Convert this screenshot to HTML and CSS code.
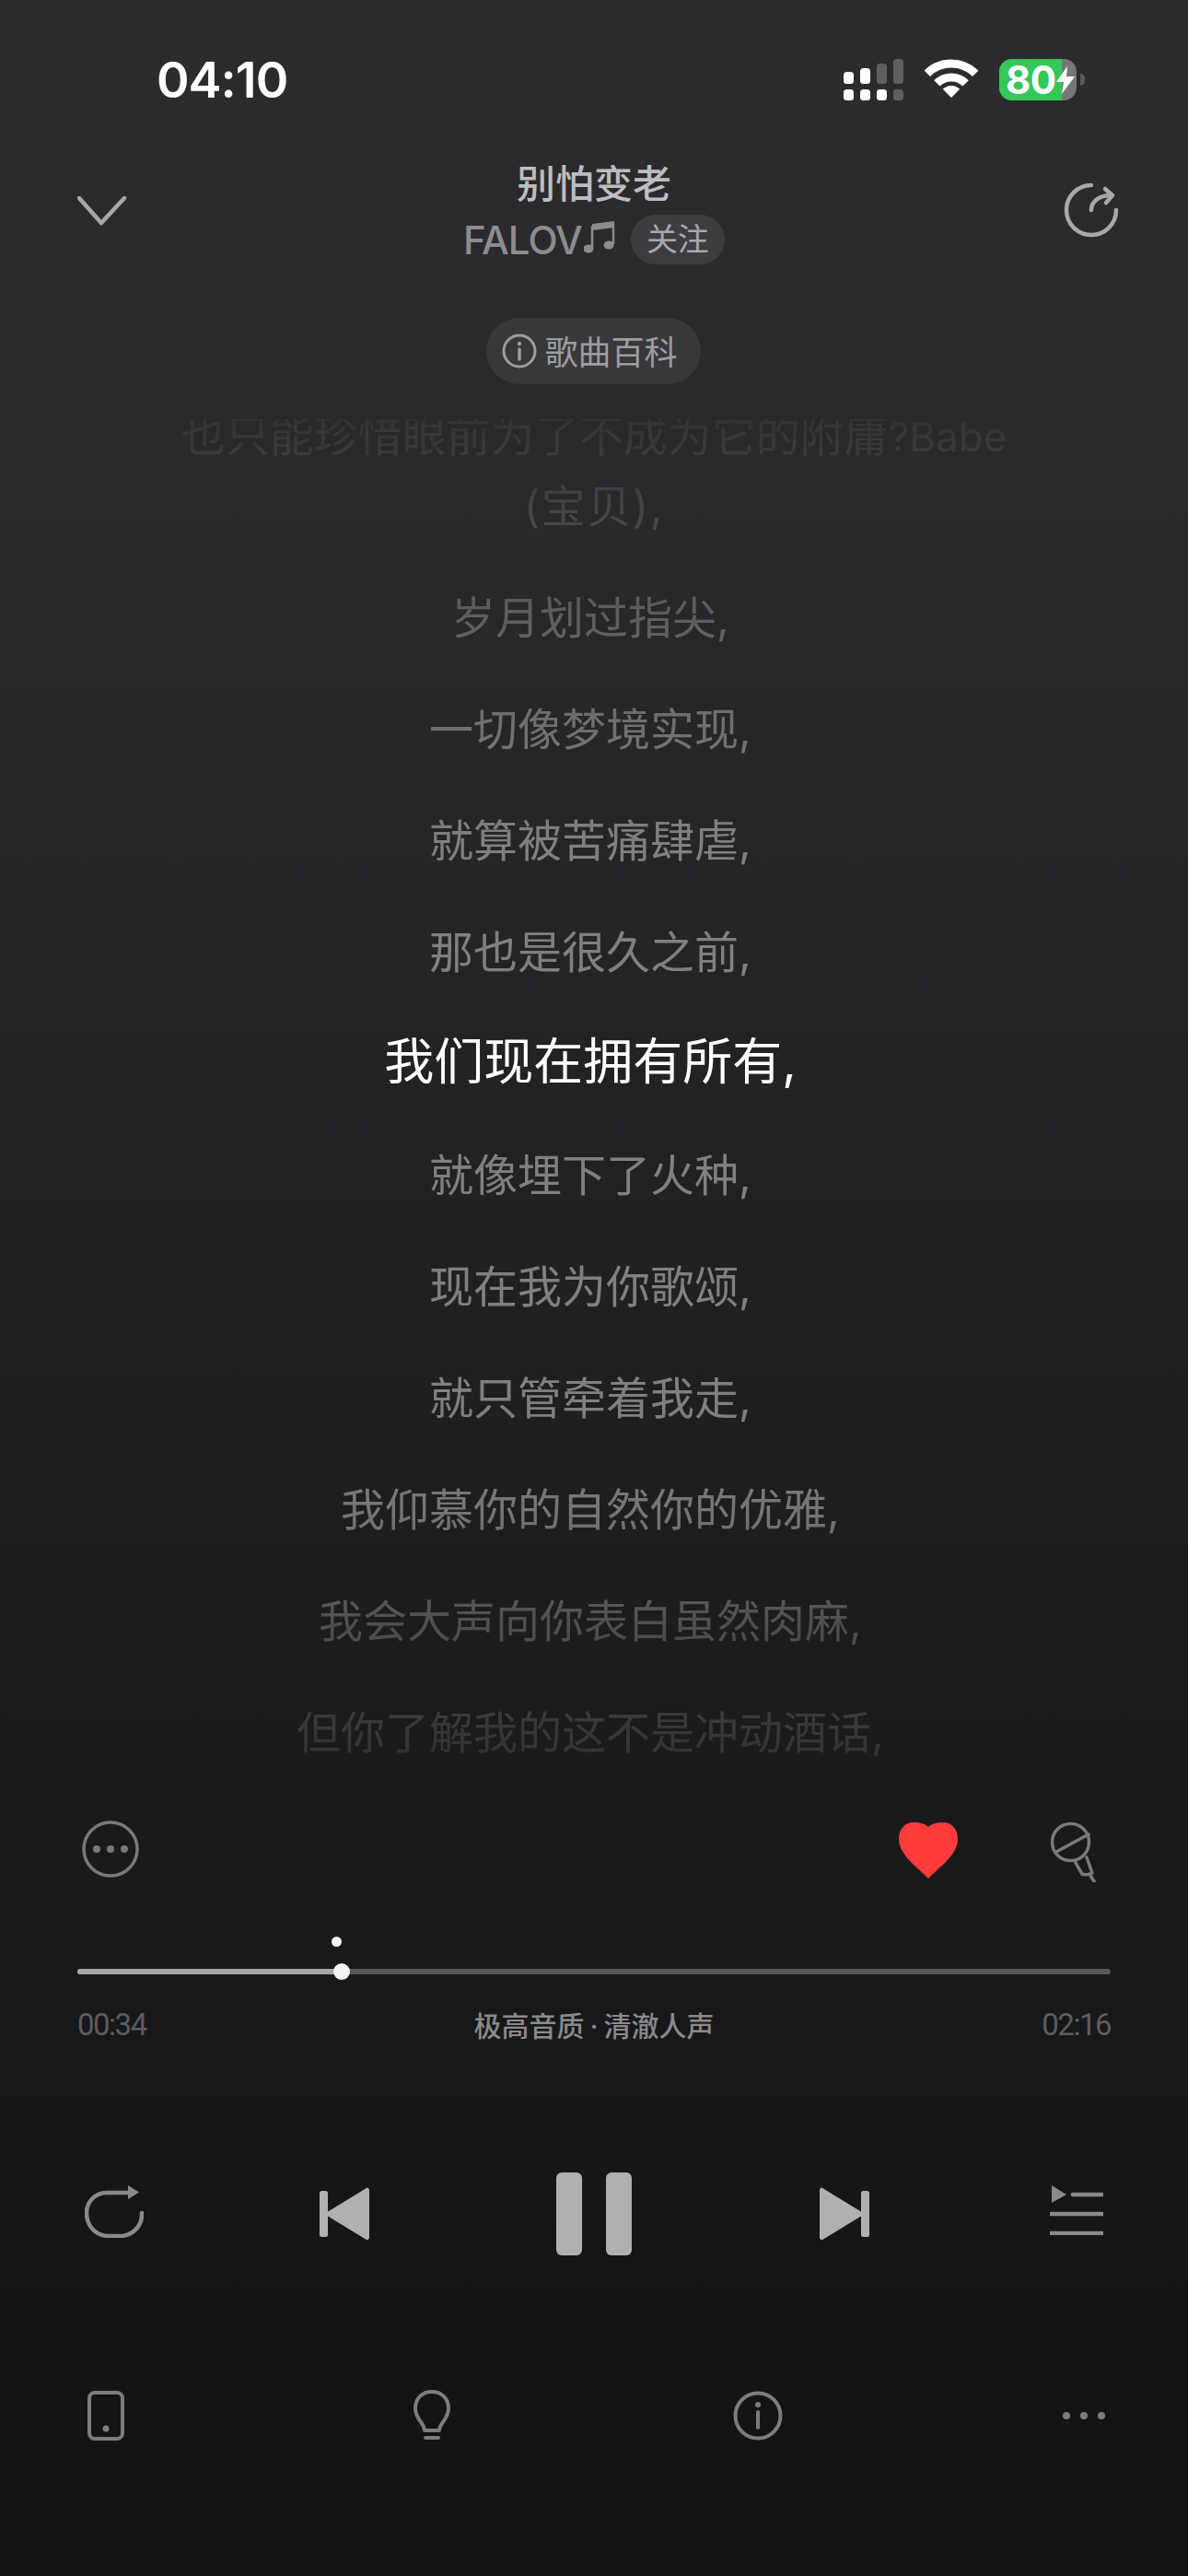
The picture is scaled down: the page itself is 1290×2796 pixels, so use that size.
FILE: index.html
```html
<!DOCTYPE html>
<html lang="zh-CN">
<head>
<meta charset="utf-8">
<title>别怕变老</title>
<link rel="stylesheet" href="styles.css">
</head>
<body>
<main class="screen">
  <div class="status">
    <span class="time">04:10</span>
    <div class="status-icons">
      <svg class="signal" width="66" height="46" viewBox="0 0 66 46">
        <rect class="on" x="0" y="14" width="11" height="13" rx="3.5"/>
        <rect class="on" x="18" y="10" width="11" height="17" rx="3.5"/>
        <rect class="off" x="36" y="5" width="11" height="22" rx="3.5"/>
        <rect class="off" x="54" y="0" width="11" height="27" rx="3.5"/>
        <rect class="on" x="0" y="33" width="11" height="12" rx="3.5"/>
        <rect class="on" x="18" y="33" width="11" height="12" rx="3.5"/>
        <rect class="on" x="36" y="33" width="11" height="12" rx="3.5"/>
        <rect class="off" x="54" y="33" width="11" height="12" rx="3.5"/>
      </svg>
      <svg class="wifi" width="58" height="43" viewBox="0 0 58 43">
        <path class="wifi-arc" d="M2.8 15.8A37 37 0 0 1 55.2 15.8"/>
        <path class="wifi-arc" d="M13.4 26.4A22 22 0 0 1 44.6 26.4"/>
        <path class="wifi-fill" d="M29 42L19.8 32.8A13 13 0 0 1 38.2 32.8Z"/>
      </svg>
      <div class="battery">
        <div class="battery-body">
          <div class="battery-level" style="width:81%"></div>
          <span class="battery-text">80</span>
          <svg class="bolt" width="20" height="30" viewBox="0 0 20 30"><path d="M12 0L0 17H8L6 30L20 11H11Z"/></svg>
        </div>
        <span class="battery-tip"></span>
      </div>
    </div>
  </div>

  <header class="header">
    <svg class="chevron" width="54" height="32" viewBox="0 0 54 32"><path d="M2 2L26 29L51 2"/></svg>
    <div class="song">
      <h1 class="song-title">别怕变老</h1>
      <div class="artist-row">
        <span class="artist">FALOV</span>
        <svg class="note" width="36" height="38" viewBox="0 0 36 38"><path class="beam" d="M9 4L33 1V8L9 11Z"/><path d="M9 6V30M32 3V26"/><ellipse cx="5" cy="31" rx="5.500" ry="4.500"/><ellipse cx="27" cy="27" rx="5.500" ry="4.500"/></svg>
        <span class="follow">关注</span>
      </div>
    </div>
    <svg class="share" width="60" height="60" viewBox="0 0 60 60"><path d="M30 3A27 27 0 1 0 57 30"/><path d="M30 30C30 21 38 14 52 14M45 7L53 14L46 22"/></svg>
  </header>

  <div class="wiki-wrap">
    <div class="wiki">
      <svg class="wiki-icon" width="38" height="38" viewBox="0 0 38 38"><circle cx="19" cy="19" r="17"/><path d="M19 17V28"/><circle class="dot" cx="19" cy="11" r="2.200"/></svg>
      <span>歌曲百科</span>
    </div>
  </div>

  <section class="lyrics">
    <p class="line first">也只能珍惜眼前为了不成为它的附庸<span class="latin">?Babe</span><br><span class="paren">(宝贝),</span></p>
    <p class="line">岁月划过指尖,</p>
    <p class="line">一切像梦境实现,</p>
    <p class="line">就算被苦痛肆虐,</p>
    <p class="line">那也是很久之前,</p>
    <p class="line active">我们现在拥有所有,</p>
    <p class="line">就像埋下了火种,</p>
    <p class="line">现在我为你歌颂,</p>
    <p class="line">就只管牵着我走,</p>
    <p class="line">我仰慕你的自然你的优雅,</p>
    <p class="line">我会大声向你表白虽然肉麻,</p>
    <p class="line">但你了解我的这不是冲动酒话,</p>
  </section>

  <div class="actions">
    <svg class="more-circle" width="62" height="62" viewBox="0 0 62 62"><circle cx="31" cy="31" r="29"/><circle class="dot" cx="16" cy="31" r="4"/><circle class="dot" cx="31" cy="31" r="4"/><circle class="dot" cx="46" cy="31" r="4"/></svg>
    <svg class="heart" width="64" height="62" viewBox="0 0 64 62"><path d="M32 61C22 50 0 36 0 18C0 7 7 0 16 0C23 0 29 2 32 5C35 2 41 0 48 0C57 0 64 7 64 18C64 36 42 50 32 61Z"/></svg>
    <svg class="mic" width="50" height="67" viewBox="0 0 50 67"><circle cx="22.500" cy="23.500" r="20"/><path d="M7 34L42 15"/><path d="M28 46L35 58Q41 60 46 57L40 40"/><path d="M43 58L48 66"/></svg>
  </div>

  <section class="progress">
    <div class="track">
      <div class="track-fill" style="width:25.600%"></div>
      <span class="marker" style="left:25%"></span>
      <span class="knob" style="left:25.600%"></span>
    </div>
    <div class="times">
      <span class="clock">00:34</span>
      <span class="quality">极高音质 · 清澈人声</span>
      <span class="clock">02:16</span>
    </div>
  </section>

  <div class="controls">
    <svg class="repeat" width="64" height="58" viewBox="0 0 64 58"><path d="M54 9H24C11 9 2 19 2 31C2 45 12 56 26 56H38C51 56 62 46 62 33V31"/><path class="solid" d="M47 1L59 8.500L47 16Z"/></svg>
    <svg class="transport" width="54" height="58" viewBox="0 0 54 58"><rect x="0" y="4" width="9" height="50" rx="2.500"/><path d="M51 0.500C53 0.500 54 1.500 54 3.500V54.500C54 56.500 52 58 50 56.500L5 29L50 1.500Z"/></svg>
    <div class="pause"><span></span><span></span></div>
    <svg class="transport" width="54" height="58" viewBox="0 0 54 58"><rect x="45" y="4" width="9" height="50" rx="2.500"/><path d="M3 0.500C1 0.500 0 1.500 0 3.500V54.500C0 56.500 2 58 4 56.500L49 29L4 1.500Z"/></svg>
    <svg class="queue" width="58" height="54" viewBox="0 0 58 54"><path class="solid" d="M2 0L18 10L2 19Z"/><path d="M25 10H57M1 31H57M1 52H57"/></svg>
  </div>

  <div class="tools">
    <svg class="tool" width="40" height="54" viewBox="0 0 40 54"><rect x="2" y="2" width="36" height="50" rx="6"/><circle class="dot" cx="20" cy="41" r="3.500"/></svg>
    <svg class="tool" width="40" height="55" viewBox="0 0 40 55"><path d="M12 44C12 36 2 32 2 20C2 9 10 2 20 2C30 2 38 9 38 20C38 32 28 36 28 44Z"/><path d="M13 52H27"/></svg>
    <svg class="tool" width="54" height="54" viewBox="0 0 54 54"><circle cx="27" cy="27" r="24.500"/><path d="M27 23V40"/><circle class="dot" cx="27" cy="15" r="3"/></svg>
    <svg class="tool" width="46" height="54" viewBox="0 0 46 54"><circle class="dot" cx="4" cy="27" r="4"/><circle class="dot" cx="23" cy="27" r="4"/><circle class="dot" cx="42" cy="27" r="4"/></svg>
  </div>
</main>
</body>
</html>
```
FILE: styles.css
```css
* { box-sizing: border-box; }
html, body { margin: 0; padding: 0; }
body { width: 1290px; height: 2796px; overflow: hidden; background: #121214; }

.screen {
  width: 1290px;
  height: 2796px;
  display: flex;
  flex-direction: column;
  background: linear-gradient(180deg, #2c2c2f 0%, #29292c 20%, #1a1a1c 70%, #121214 100%);
  font-family: Inter, "Noto Sans CJK SC", sans-serif;
  overflow: hidden;
}

/* status bar */
.status {
  height: 174px;
  padding: 64px 0 0 170px;
  display: flex;
  align-items: flex-start;
  justify-content: space-between;
}
.time { color: #fff; font-size: 54px; line-height: 46px; font-weight: 600; letter-spacing: -1px; }
.status-icons { display: flex; align-items: flex-start; padding-right: 112px; }
.signal .on { fill: #fff; }
.signal .off { fill: #5f5f61; }
.signal { margin: 0 22px 0 0; }
.wifi { margin-right: 23px; }
.wifi-arc { fill: none; stroke: #fff; stroke-width: 9; }
.wifi-fill { fill: #fff; }
.battery { display: flex; align-items: center; height: 45px; gap: 4px; }
.battery-body {
  position: relative;
  width: 84px;
  height: 45px;
  border-radius: 14px;
  background: #777779;
  display: flex;
  align-items: center;
  padding-left: 7px;
}
.battery-level { position: absolute; left: 0; top: 0; bottom: 0; border-radius: 14px 0 0 14px; background: #34c759; }
.battery-text { position: relative; color: #fff; font-size: 42px; font-weight: 700; line-height: 45px; letter-spacing: -0.5px; white-space: nowrap; }
.bolt { position: absolute; left: 62px; top: 8px; }
.bolt path { fill: #fff; }
.battery-tip { width: 5px; height: 13px; border-radius: 0 5px 5px 0; background: #5a5a5c; }

/* header */
.header {
  height: 120px;
  padding: 0 75px 0 84px;
  display: flex;
  justify-content: space-between;
  align-items: flex-start;
}
.chevron { margin-top: 39px; }
.chevron path { fill: none; stroke: #a8a8aa; stroke-width: 4.500; stroke-linecap: round; stroke-linejoin: round; }
.share { margin-top: 24px; }
.share path { fill: none; stroke: #a8a8aa; stroke-width: 4.500; stroke-linecap: round; stroke-linejoin: round; }
.song { display: flex; flex-direction: column; align-items: center; flex: 1; margin-right: 3px; }
.song-title { margin: 0; font-size: 42px; line-height: 52px; font-weight: 500; color: #bdbdbf; }
.artist-row { height: 68px; display: flex; align-items: center; }
.artist { font-size: 42px; font-weight: 500; color: #8c8c8e; letter-spacing: -1px; }
.note { margin: -4px 0 0 2px; }
.note path { fill: none; stroke: #8c8c8e; stroke-width: 2.500; }
.note .beam { fill: #8c8c8e; stroke: none; }
.note ellipse { fill: #8c8c8e; }
.follow {
  margin-left: 15px;
  width: 102px;
  height: 54px;
  border-radius: 27px;
  background: #3d3d40;
  color: #a8a8aa;
  font-size: 34px;
  line-height: 53px;
  text-align: center;
}

/* wiki */
.wiki-wrap { margin-top: 51px; display: flex; justify-content: center; padding-right: 2px; }
.wiki {
  width: 233px;
  height: 72px;
  border-radius: 36px;
  background: #38383b;
  display: flex;
  align-items: center;
  gap: 9px;
  padding: 0 0 2px 17px;
  color: #9d9d9f;
  font-size: 36px;
}
.wiki-icon { margin-top: 2px; }
.wiki-icon circle { fill: none; stroke: #9d9d9f; stroke-width: 3; }
.wiki-icon path { stroke: #9d9d9f; stroke-width: 3.500; stroke-linecap: round; }
.wiki-icon .dot { fill: #9d9d9f; stroke: none; }

/* lyrics */
.lyrics {
  margin-top: 38px;
  height: 1460px;
  overflow: hidden;
  display: flex;
  flex-direction: column;
  gap: 45px;
  -webkit-mask-image: linear-gradient(180deg, rgba(0,0,0,.12) 0, rgba(0,0,0,.3) 94px, rgba(0,0,0,.62) 214px, rgba(0,0,0,.82) 335px, #000 457px, #000 1062px, rgba(0,0,0,.9) 1183px, rgba(0,0,0,.52) 1304px, rgba(0,0,0,.28) 1426px, rgba(0,0,0,.22) 1460px);
  mask-image: linear-gradient(180deg, rgba(0,0,0,.12) 0, rgba(0,0,0,.3) 94px, rgba(0,0,0,.62) 214px, rgba(0,0,0,.82) 335px, #000 457px, #000 1062px, rgba(0,0,0,.9) 1183px, rgba(0,0,0,.52) 1304px, rgba(0,0,0,.28) 1426px, rgba(0,0,0,.22) 1460px);
}
.line {
  margin: 0;
  padding-right: 8px;
  font-size: 48px;
  line-height: 76px;
  text-align: center;
  color: #808082;
  flex: none;
}
.line.first { margin-top: -20px; padding-right: 0; }
.latin { font-size: 44px; }
.paren { letter-spacing: 1.500px; }
.line.active { color: #fff; font-size: 54px; line-height: 72px; padding-bottom: 4px; }

/* actions */
.actions {
  margin-top: 61px;
  height: 66px;
  padding: 0 100px 0 89px;
  display: flex;
  align-items: flex-start;
}
.more-circle { margin-right: auto; }
.more-circle circle { fill: none; stroke: #79797b; stroke-width: 3.500; }
.more-circle .dot { fill: #79797b; stroke: none; }
.heart { margin: 2px 100px 0 0; }
.heart path { fill: #ff3b3b; }
.mic * { fill: none; stroke: #79797b; stroke-width: 3.500; stroke-linejoin: round; stroke-linecap: round; }

/* progress */
.progress { margin-top: 95px; padding: 0 84px; }
.track { position: relative; height: 6px; border-radius: 3px; background: #5a5a5c; }
.track-fill { height: 6px; border-radius: 3px; background: #a6a6a8; }
.marker { position: absolute; top: -35px; width: 11px; height: 11px; margin-left: -5px; border-radius: 50%; background: #f2f2f2; }
.knob { position: absolute; top: -6px; width: 18px; height: 18px; margin-left: -9px; border-radius: 50%; background: #f2f2f2; }
.times { margin-top: 34px; height: 40px; display: flex; justify-content: space-between; align-items: center; }
.clock { font-family: Roboto, sans-serif; font-size: 33px; letter-spacing: -1.5px; color: #5c5c5e; }
.quality { font-size: 30px; font-weight: 500; word-spacing: -2px; color: #8a8a8c; }

/* controls */
.controls {
  margin-top: 141px;
  height: 90px;
  padding-left: 92px;
  display: grid;
  grid-template-columns: 255px 257px 286px 250px 1fr;
  align-items: center;
}
.repeat { margin-bottom: 6px; }
.repeat path { fill: none; stroke: #8a8a8c; stroke-width: 4.500; stroke-linecap: round; }
.repeat .solid { fill: #8a8a8c; stroke: none; }
.transport { fill: #b0b0b0; }
.pause { display: flex; gap: 26px; }
.pause span { width: 28px; height: 90px; border-radius: 6px; background: #b0b0b0; }
.queue { margin-bottom: 8px; }
.queue path { fill: none; stroke: #8a8a8c; stroke-width: 4.500; stroke-linecap: round; }
.queue .solid { fill: #8a8a8c; stroke: none; }

/* tools */
.tools {
  margin-top: 146px;
  padding-left: 95px;
  display: grid;
  grid-template-columns: 354px 347px 358px 1fr;
  align-items: center;
}
.tool * { fill: none; stroke: #7d7d7f; stroke-width: 4; stroke-linecap: round; stroke-linejoin: round; }
.tool .dot { fill: #7d7d7f; stroke: none; }
```
